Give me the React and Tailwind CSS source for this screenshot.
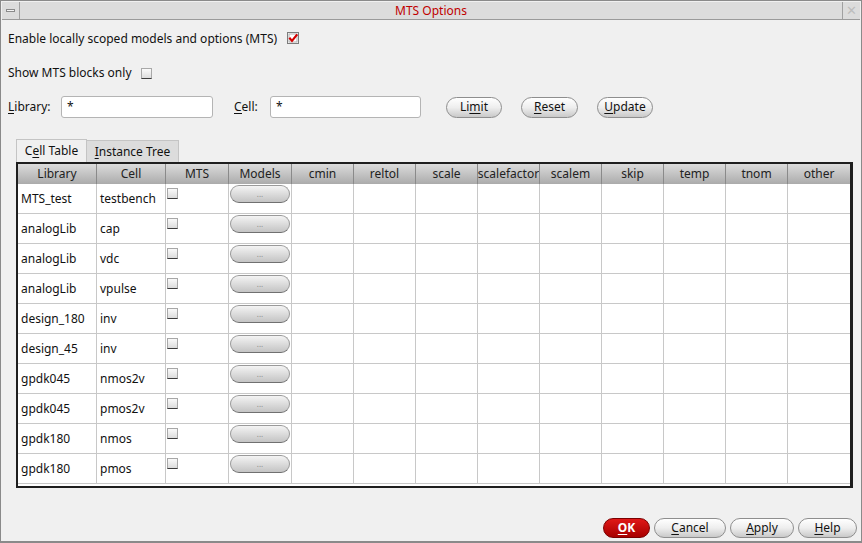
const font = { fontFamily: '"Noto Sans", "Open Sans", sans-serif' };

const columns = [
  { name: "Library", w: "w-[79px]" },
  { name: "Cell", w: "w-[69px]" },
  { name: "MTS", w: "w-[63px]" },
  { name: "Models", w: "w-[63px]" },
  { name: "cmin", w: "w-[62px]" },
  { name: "reltol", w: "w-[62px]" },
  { name: "scale", w: "w-[62px]" },
  { name: "scalefactor", w: "w-[62px]" },
  { name: "scalem", w: "w-[62px]" },
  { name: "skip", w: "w-[62px]" },
  { name: "temp", w: "w-[62px]" },
  { name: "tnom", w: "w-[62px]" },
  { name: "other", w: "w-[62px]" },
];

const rows = [
  ["MTS_test", "testbench"],
  ["analogLib", "cap"],
  ["analogLib", "vdc"],
  ["analogLib", "vpulse"],
  ["design_180", "inv"],
  ["design_45", "inv"],
  ["gpdk045", "nmos2v"],
  ["gpdk045", "pmos2v"],
  ["gpdk180", "nmos"],
  ["gpdk180", "pmos"],
];

function Box() {
  return (
    <span className="block w-[11px] h-[11px] border border-[#a8a8a8] border-b-[#3a3a3a] bg-gradient-to-b from-[#fafafa] to-[#dcdcdc]" />
  );
}

function CheckedBox() {
  return (
    <svg width="12" height="12" viewBox="0 0 12 12">
      <rect x="0.5" y="0.5" width="11" height="11" fill="#fff" stroke="#000" strokeDasharray="1 1" />
      <rect x="2" y="2" width="8" height="8" fill="#fff" stroke="#b0b0b0" />
      <path d="M2.3 5.8 L5 8.9 L10.2 2.4" fill="none" stroke="#d40000" strokeWidth="2.2" />
    </svg>
  );
}

function Pill({ children, className = "" }) {
  return (
    <button
      className={
        "h-[21px] rounded-full border border-[#8e8e8e] bg-gradient-to-b from-[#ffffff] via-[#eeeeee] to-[#c9c9c9] text-[12px] text-[#111] flex items-center justify-center " +
        className
      }
    >
      {children}
    </button>
  );
}

export default function App() {
  return (
    <div
      style={font}
      className="w-[862px] h-[543px] bg-[#f0f0f0] border border-[#8a8a8a] border-b-2 flex flex-col text-[12px] text-[#111] overflow-hidden"
    >
      {/* title bar */}
      <div className="h-[18px] flex bg-[#dcdcdc] border-b border-[#9a9a9a] mx-[1px] mt-[1px]">
        <div className="w-[18px] border-r border-[#a0a0a0] flex items-center justify-center">
          <span className="block w-[9px] h-[3px] border border-[#8a8a8a] bg-[#f4f4f4]" />
        </div>
        <div className="flex-1 text-center text-[#c00000] leading-[18px]">MTS Options</div>
        <div className="w-[18px] border-l border-[#a0a0a0] flex items-center justify-center text-[#bdbdbd] text-[13px] leading-none">
          ✕
        </div>
      </div>

      {/* options */}
      <div className="flex items-center h-[24px] mt-[7px] pl-[7px]">
        <span>Enable locally scoped models and options (MTS)</span>
        <span className="ml-[10px] mt-[-2px]">
          <CheckedBox />
        </span>
      </div>
      <div className="flex items-center h-[24px] mt-[10px] pl-[7px]">
        <span>Show MTS blocks only</span>
        <span className="ml-[9px]">
          <Box />
        </span>
      </div>
      <div className="flex items-center h-[24px] mt-[10px] pl-[7px]">
        <span className="w-[53px]">
          <u className="no-underline border-b border-[#111] leading-[13px] inline-block">L</u>ibrary:
        </span>
        <div className="w-[152px] h-[22px] bg-white border border-[#b4b4b4] rounded-[3px] px-[5px] leading-[20px]">*</div>
        <span className="ml-[21px] w-[36px]">
          <u className="no-underline border-b border-[#111] leading-[13px] inline-block">C</u>ell:
        </span>
        <div className="w-[151px] h-[22px] bg-white border border-[#b4b4b4] rounded-[3px] px-[5px] leading-[20px]">*</div>
        <Pill className="ml-[25px] w-[56px]">
          <span>
            Li<u className="underline underline-offset-2">m</u>it
          </span>
        </Pill>
        <Pill className="ml-[19px] w-[57px]">
          <span>
            <u className="underline underline-offset-2">R</u>eset
          </span>
        </Pill>
        <Pill className="ml-[19px] w-[56px]">
          <span>
            <u className="underline underline-offset-2">U</u>pdate
          </span>
        </Pill>
      </div>

      {/* tabs */}
      <div className="mt-[20px] pl-[15px] flex items-end h-[23px]">
        <div className="w-[71px] h-[23px] bg-[#f0f0f0] border border-b-0 border-[#c4c4c4] flex items-center justify-center">
          C<u className="underline underline-offset-2">e</u>ll Table
        </div>
        <div className="w-[92px] h-[22px] bg-[#dcdcdc] border border-l-0 border-b-0 border-[#c4c4c4] flex items-center justify-center">
          <u className="underline underline-offset-2">I</u>nstance Tree
        </div>
      </div>

      {/* table */}
      <div className="ml-[15px] w-[837px] border-t-2 border-l-2 border-r-[3px] border-b-2 border-[#1e1e1e] bg-white">
        <div className="flex h-[20px] bg-gradient-to-b from-[#dcdcdc] to-[#ababab]">
          {columns.map((c) => (
            <div
              key={c.name}
              className={c.w + " shrink-0 border-r border-[#8a8a8a] last:border-r-0 flex items-center justify-center overflow-hidden whitespace-nowrap text-[#222]"}
            >
              {c.name}
            </div>
          ))}
        </div>
        {rows.map((r, i) => (
          <div key={i} className="flex h-[30px] border-b border-[#c8c8c8] last:border-b-0">
            {columns.map((c, j) => (
              <div key={c.name} className={c.w + " shrink-0 border-r border-[#c8c8c8] last:border-r-0"}>
                {j < 2 && <div className="h-full flex items-center pl-[3px]">{r[j]}</div>}
                {j === 2 && (
                  <div className="pt-[4px] pl-[1px]">
                    <Box />
                  </div>
                )}
                {j === 3 && (
                  <div className="pt-[1px] pl-[1px]">
                    <div className="w-[60px] h-[18px] rounded-full border border-[#9a9a9a] border-b-[#707070] bg-gradient-to-b from-[#f4f4f4] to-[#c4c4c4] flex items-center justify-center text-[8px] text-[#8a8a8a] leading-none">
                      ...
                    </div>
                  </div>
                )}
              </div>
            ))}
          </div>
        ))}
        <div className="h-[2px]" />
      </div>

      <div className="flex-1" />

      {/* bottom buttons */}
      <div className="flex justify-end gap-[4px] pr-[4px] pb-[3px]">
        <button className="w-[47px] h-[20px] rounded-full border border-[#7a0000] bg-gradient-to-b from-[#e01818] to-[#a80000] text-white font-bold text-[12px] flex items-center justify-center">
          <span>
            <u className="underline underline-offset-2">O</u>K
          </span>
        </button>
        <Pill className="w-[72px] !h-[20px]">
          <span>
            <u className="underline underline-offset-2">C</u>ancel
          </span>
        </Pill>
        <Pill className="w-[64px] !h-[20px]">
          <span>
            <u className="underline underline-offset-2">A</u>pply
          </span>
        </Pill>
        <Pill className="w-[59px] !h-[20px]">
          <span>
            <u className="underline underline-offset-2">H</u>elp
          </span>
        </Pill>
      </div>
    </div>
  );
}
